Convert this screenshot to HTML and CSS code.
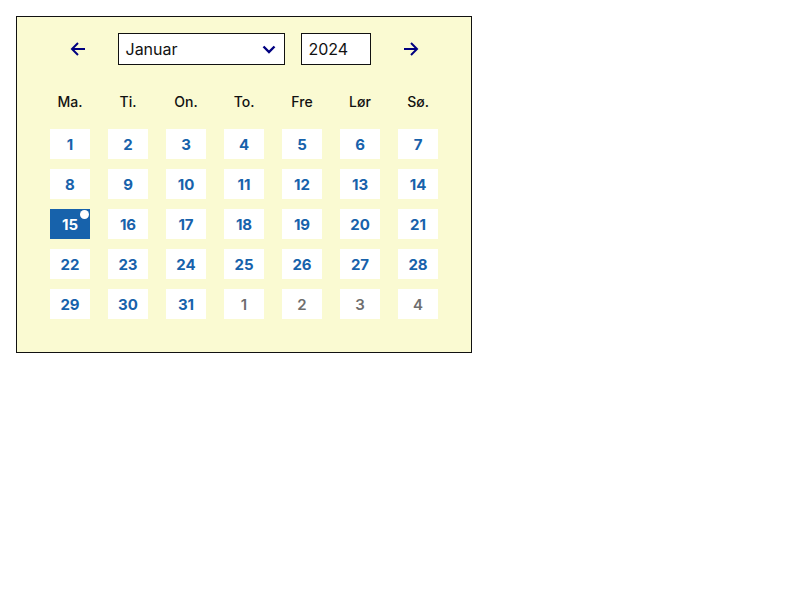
FILE: index.html
```html
<!DOCTYPE html>
<html lang="no">
<head>
<meta charset="utf-8">
<title>Kalender</title>
<link rel="stylesheet" href="styles.css">
</head>
<body>
<div class="calendar">
  <div class="header">
    <button class="nav" aria-label="Forrige måned">
      <svg width="16" height="16" viewBox="0 0 16 16"><path d="M15 8H2M8 2L2 8l6 6" fill="none" stroke="#000080" stroke-width="2"/></svg>
    </button>
    <div class="select">
      <span>Januar</span>
      <svg width="14" height="10" viewBox="0 0 14 10"><path d="M1.5 2.5l5.5 5.5 5.5-5.5" fill="none" stroke="#000080" stroke-width="2.4"/></svg>
    </div>
    <div class="year">2024</div>
    <button class="nav" aria-label="Neste måned">
      <svg width="16" height="16" viewBox="0 0 16 16"><path d="M1 8h13M8 2l6 6-6 6" fill="none" stroke="#000080" stroke-width="2"/></svg>
    </button>
  </div>
  <div class="weekdays">
    <span>Ma.</span><span>Ti.</span><span>On.</span><span>To.</span><span>Fre</span><span>Lør</span><span>Sø.</span>
  </div>
  <div class="days">
    <div class="day">1</div><div class="day">2</div><div class="day">3</div><div class="day">4</div><div class="day">5</div><div class="day">6</div><div class="day">7</div>
    <div class="day">8</div><div class="day">9</div><div class="day">10</div><div class="day">11</div><div class="day">12</div><div class="day">13</div><div class="day">14</div>
    <div class="day selected">15<span class="dot"></span></div><div class="day">16</div><div class="day">17</div><div class="day">18</div><div class="day">19</div><div class="day">20</div><div class="day">21</div>
    <div class="day">22</div><div class="day">23</div><div class="day">24</div><div class="day">25</div><div class="day">26</div><div class="day">27</div><div class="day">28</div>
    <div class="day">29</div><div class="day">30</div><div class="day">31</div><div class="day other">1</div><div class="day other">2</div><div class="day other">3</div><div class="day other">4</div>
  </div>
</div>
</body>
</html>
```

FILE: styles.css
```css
* { box-sizing: border-box; }
body {
  margin: 16px;
  font-family: Inter, "Noto Sans", sans-serif;
  color: #111;
  background: #fff;
}
.calendar {
  width: 456px;
  border: 1px solid #111;
  background: #fafad2;
  padding: 16px 33px 33px;
}
.header {
  display: flex;
  align-items: center;
  justify-content: center;
  height: 32px;
}
.nav {
  width: 32px;
  height: 32px;
  border: 0;
  background: transparent;
  padding: 0;
  display: flex;
  align-items: center;
  justify-content: center;
}
.nav:first-child { margin-right: 24px; }
.nav:last-child { margin-left: 24px; }
.select {
  width: 167px;
  height: 32px;
  border: 1px solid #111;
  background: #fff;
  display: flex;
  align-items: center;
  justify-content: space-between;
  padding: 0 8px 0 7px;
  font-size: 16px;
  margin-right: 16px;
}
.year {
  width: 70px;
  height: 32px;
  border: 1px solid #111;
  background: #fff;
  display: flex;
  align-items: center;
  padding: 0 7px;
  font-size: 16px;
}
.weekdays {
  display: grid;
  grid-template-columns: repeat(7, 40px);
  column-gap: 18px;
  margin-top: 26px;
  height: 20px;
  align-items: center;
}
.weekdays span {
  text-align: center;
  font-size: 14px;
  font-weight: 500;
}
.days {
  display: grid;
  grid-template-columns: repeat(7, 40px);
  grid-auto-rows: 30px;
  column-gap: 18px;
  row-gap: 10px;
  margin-top: 18px;
}
.day {
  position: relative;
  background: #fff;
  display: flex;
  align-items: center;
  justify-content: center;
  font-size: 15px;
  font-weight: 700;
  color: #1762ab;
}
.day.other {
  color: #6e6e6e;
  font-weight: 600;
}
.day.selected {
  background: #1762ab;
  color: #fff;
}
.dot {
  position: absolute;
  top: 1px;
  right: 1px;
  width: 9px;
  height: 9px;
  border-radius: 50%;
  background: #fff;
}
```
